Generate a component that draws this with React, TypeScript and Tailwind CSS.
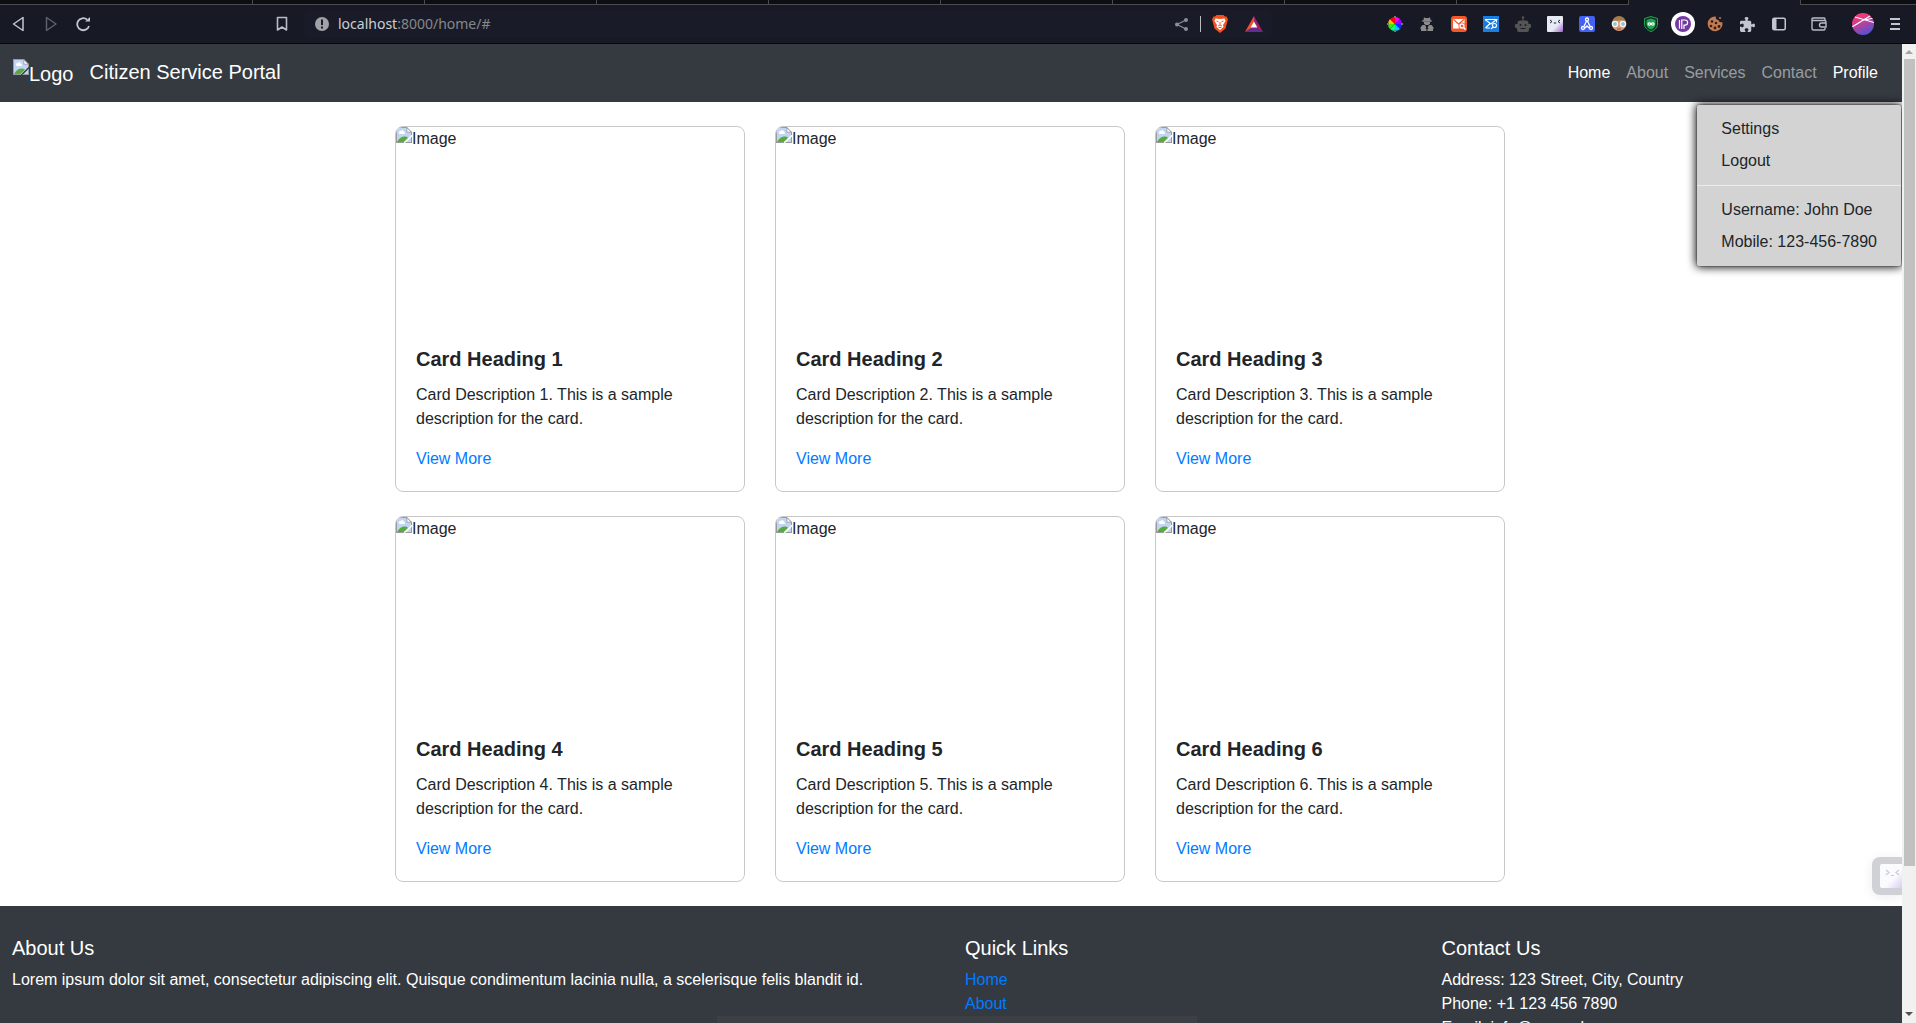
import React from "react";
import { FaPuzzlePiece } from "react-icons/fa6";

function BrokenImage({ alt, className = "" }: { alt: string; className?: string }) {
  return (
    <span role="img" aria-label={alt} className={`flex items-start ${className}`}>
      <svg width="16" height="16" viewBox="0 0 16 16" className="shrink-0" aria-hidden="true">
        <path d="M0.5 0.5H11L15.5 5V8L8 15.5H0.5Z" fill="#c3d5f5" />
        <path d="M0 0H11V1H1V15H8V16H0Z" fill="#9a9a9a" />
        <path d="M11 0L16 5V8H15V5.5H10.500V1H11Z" fill="#9a9a9a" />
        <path d="M11.300 1.500V4.700H14.500Z" fill="#fff" />
        <path d="M3 6a1.500 1.500 0 0 1 1.500-2 2 2 0 0 1 3.500 1 1 1 0 0 1 0 2H3.500Z" fill="#fff" />
        <path d="M1 15C3 11 6 9.500 8.500 9.500C10 9.500 11 10 12 10.800L7.500 15Z" fill="#56ab3a" />
        <path d="M15.500 10V15.500H10Z" fill="#c3d5f5" />
        <path d="M16 9.500V16H9.500V15H15V10.500Z" fill="#9a9a9a" />
      </svg>
      <span aria-hidden="true">{alt}</span>
    </span>
  );
}

function ToolButton({ label, children, className = "w-8" }: { label: string; children: React.ReactNode; className?: string }) {
  return (
    <button type="button" aria-label={label} className={`flex h-8 shrink-0 items-center justify-center ${className}`}>
      {children}
    </button>
  );
}

const extensions: { label: string; icon: React.ReactNode }[] = [
  {
    label: "Color picker",
    icon: (
      <svg width="16" height="16" viewBox="0 0 16 16">
        <path d="M8 8V1A7 7 0 0 1 13 3Z" fill="#f0f" />
        <path d="M8 8L13 3A7 7 0 0 1 15 8Z" fill="#90f" />
        <path d="M8 8H15A7 7 0 0 1 13 13Z" fill="#22f" />
        <path d="M8 8L13 13A7 7 0 0 1 8 15Z" fill="#0cf" />
        <path d="M8 8V15A7 7 0 0 1 3 13Z" fill="#0f8" />
        <path d="M8 8L3 13A7 7 0 0 1 1 8Z" fill="#3e0" />
        <path d="M8 8H1A7 7 0 0 1 3 3Z" fill="#fb0" />
        <path d="M8 8L3 3A7 7 0 0 1 8 1Z" fill="#f01" />
        <path d="M7 0h2v2H7zM7 14h2v2H7zM0 7h2v2H0zM14 7h2v2h-2z" fill="#777" />
      </svg>
    ),
  },
  {
    label: "Private browsing",
    icon: (
      <svg width="14" height="14" viewBox="0 0 14 14" fill="#8b8b8b">
        <path d="M4 0L5 1H9L10 0 10.500 3 12.500 4 11 4.700H3L1.500 4 3.500 3Z" />
        <path d="M4 5H10V6.500L8.500 8H5.500L4 6.500Z" />
        <path d="M2.500 8H5L6.300 10.500 5.500 12H6.500V14H1V12H0.500V10.500Z" />
        <path d="M11.500 8H9L7.700 10.500 8.500 12H7.500V14H13V12H13.500V10.500Z" />
      </svg>
    ),
  },
  {
    label: "Mail search",
    icon: (
      <svg width="16" height="16" viewBox="0 0 16 16" fill="none" stroke="#fff">
        <rect width="16" height="16" rx="3" fill="#f4592b" stroke="none" />
        <path d="M2 3H13.500V9L11 12.500H2Z" fill="#fff" stroke="none" />
        <path d="M2.500 3.500L7.500 8 13 3.500" stroke="#f4592b" strokeWidth="1.200" />
        <circle cx="11" cy="10" r="3.500" fill="#f4592b" stroke="none" />
        <circle cx="11" cy="10" r="2" strokeWidth="1.300" />
        <path d="M12.500 11.500l2 2" strokeWidth="1.500" />
      </svg>
    ),
  },
  {
    label: "Mail tracker",
    icon: (
      <svg width="16" height="16" viewBox="0 0 16 16" fill="none" stroke="#fff" strokeWidth="1.100">
        <rect width="16" height="16" fill="#1b7de0" stroke="none" />
        <path d="M2 3.500H13.500L8 8 2 3.500M2.500 12L7 7.500M2.500 12H7M13.500 3.500V6.500" />
        <circle cx="11.500" cy="9.500" r="2" />
        <path d="M10 11l-2 2" />
      </svg>
    ),
  },
  {
    label: "Robot",
    icon: (
      <svg width="16" height="16" viewBox="0 0 16 16">
        <circle cx="8" cy="1.500" r="1.200" fill="#545454" />
        <path d="M7.500 2h1v3h-1z" fill="#545454" />
        <path d="M5 4.500H11A2.500 2.500 0 0 1 13.500 7V8H15A1 1 0 0 1 16 9V11A1 1 0 0 1 15 12H14V14A2 2 0 0 1 12 16H4A2 2 0 0 1 2 14V12H1A1 1 0 0 1 0 11V9A1 1 0 0 1 1 8H2.500V7A2.500 2.500 0 0 1 5 4.500Z" fill="#545454" />
        <circle cx="5.500" cy="9" r="1" fill="#1b1d28" />
        <circle cx="10.500" cy="9" r="1" fill="#1b1d28" />
        <path d="M5.500 12.500h5" stroke="#1b1d28" />
      </svg>
    ),
  },
  {
    label: "Terminal face",
    icon: (
      <svg width="16" height="16" viewBox="0 0 16 16" fill="none">
        <defs>
          <linearGradient id="face" x1="0" y1="0" x2="1" y2="1">
            <stop offset="0.600" stopColor="#e6ebf5" />
            <stop offset="1" stopColor="#a35fd0" />
          </linearGradient>
        </defs>
        <rect width="16" height="16" rx="1" fill="url(#face)" />
        <path d="M3 4l2 1.500L3 7M13 4l-2 1.500L13 7M6.800 7h2.400" stroke="#252530" strokeWidth="1" />
      </svg>
    ),
  },
  {
    label: "Connections",
    icon: (
      <svg width="16" height="16" viewBox="0 0 16 16" fill="none" stroke="#fff" strokeWidth="1.300">
        <rect width="16" height="16" rx="2" fill="#4361f5" stroke="none" />
        <circle cx="8" cy="3.500" r="1.500" />
        <circle cx="4" cy="12" r="1.500" />
        <circle cx="12" cy="12" r="1.500" />
        <path d="M7.500 5L5 10.500M8.500 5L11 10.500M6 12l2-2 2 2" />
      </svg>
    ),
  },
  {
    label: "Reader",
    icon: (
      <svg width="16" height="16" viewBox="0 0 16 16">
        <circle cx="8" cy="8" r="7" fill="#d99c74" />
        <path d="M1 7A7 7 0 0 1 15 7L10 4 4 5Z" fill="#a37c4c" />
        <circle cx="4" cy="8" r="2.600" fill="#93c3cc" stroke="#f4f6f8" strokeWidth="1.400" />
        <circle cx="12" cy="8" r="2.600" fill="#93c3cc" stroke="#f4f6f8" strokeWidth="1.400" />
        <path d="M6 13h4" stroke="#a34c3c" />
      </svg>
    ),
  },
  {
    label: "Shield",
    icon: (
      <svg width="16" height="16" viewBox="0 0 16 16">
        <path d="M8 .5L14.500 2.500V8c0 4-3.500 6.500-6.500 7.500C5 14.500 1.500 12 1.500 8V2.500Z" fill="#10331f" stroke="#22a455" />
        <path d="M8 2.500L12.500 4v4c0 3-2 4.500-4.500 5.500C5.500 12.500 3.500 11 3.500 8V4Z" fill="#22a455" />
        <path d="M8 8c-1-1.500-3-1.500-3 0s2 1.500 3 0 3-1.500 3 0-2 1.500-3 0" fill="none" stroke="#fff" strokeWidth="1.200" />
      </svg>
    ),
  },
  {
    label: "IP",
    icon: (
      <svg width="24" height="24" viewBox="0 0 24 24">
        <circle cx="12" cy="12" r="12" fill="#fff" />
        <circle cx="12" cy="12" r="8" fill="#7438a3" />
        <path d="M8.500 8V16.500M10.800 17V8H14a2.600 2.600 0 0 1 0 5.200H13V17" fill="none" stroke="#fff" strokeWidth="1.200" />
      </svg>
    ),
  },
  {
    label: "Cookies",
    icon: (
      <svg width="16" height="16" viewBox="0 0 16 16">
        <path d="M9 0.500A2.500 2.500 0 0 0 11.500 4 2.500 2.500 0 0 0 15.200 6 7.400 7.400 0 1 1 9 .5Z" fill="#c57b4e" />
        <g fill="#2a1c20">
          <circle cx="5" cy="5.500" r="1.300" />
          <circle cx="9" cy="7" r="1.300" />
          <circle cx="4" cy="10" r="1.300" />
          <circle cx="8" cy="12" r="1.400" />
          <circle cx="12" cy="10.500" r="1.400" />
          <circle cx="13" cy="2" r="1" fill="#c57b4e" />
        </g>
      </svg>
    ),
  },
  { label: "Extensions", icon: <FaPuzzlePiece size={15} color="#c3c5d1" /> },
  {
    label: "Sidebar",
    icon: (
      <svg width="14" height="14" viewBox="0 0 14 14">
        <rect x="0.750" y="1.250" width="12.500" height="11.500" rx="1.500" fill="none" stroke="#c3c5d1" strokeWidth="1.500" />
        <path d="M1 1.500h3.500v11H1z" fill="#c3c5d1" />
      </svg>
    ),
  },
];

const tabs = ["t1", "t2", "t3", "t4", "t5", "t6", "t7", "t8"];

function BrowserChrome() {
  return (
    <header className="shrink-0 bg-[#171925]">
      <div className="flex h-[5px]">
        <div className="w-[253px] shrink-0 border-r border-b border-[#4b4c52] bg-[#0c0e12]" />
        {tabs.map((t) => (
          <div key={t} className="w-[172px] shrink-0 border-r border-b border-[#4b4c52] bg-[#0c0e12]" />
        ))}
        <div className="w-[171px] shrink-0" />
        <div className="flex-1 border-b border-l border-[#4b4c52] bg-[#0c0e12]" />
      </div>
      <div className="flex h-[39px] items-center border-b border-[#07080d] pl-[3px] pr-[5px]">
        <ToolButton label="Back">
          <svg width="14" height="16" viewBox="0 0 14 16"><path d="M11 1.500V14.500L1.500 8Z" fill="none" stroke="#c3c5d1" strokeWidth="1.500" strokeLinejoin="round" /></svg>
        </ToolButton>
        <ToolButton label="Forward">
          <svg width="14" height="16" viewBox="0 0 14 16"><path d="M2.500 1.500V14.500L12 8Z" fill="none" stroke="#5e606b" strokeWidth="1.500" strokeLinejoin="round" /></svg>
        </ToolButton>
        <ToolButton label="Reload">
          <svg width="15" height="16" viewBox="0 0 15 16"><path d="M13 10A6 6 0 1 1 11 3.500" fill="none" stroke="#c3c5d1" strokeWidth="1.800" /><path d="M9 5.500H14V1Z" fill="#c3c5d1" /></svg>
        </ToolButton>
        <div className="flex w-[205px] shrink-0 justify-end pr-[6px]">
          <ToolButton label="Bookmark">
            <svg width="12" height="16" viewBox="0 0 12 16"><path d="M1.500 1.500H10.500V14L6 11 1.500 14Z" fill="none" stroke="#b9bbc7" strokeWidth="1.600" strokeLinejoin="round" /></svg>
          </ToolButton>
        </div>
        <div className="flex h-[30px] w-[968px] shrink-0 items-center rounded-md bg-[#191c28] pl-[11px] pr-[2px]">
          <svg width="14" height="14" viewBox="0 0 14 14" className="shrink-0"><circle cx="7" cy="7" r="7" fill="#a0a2a8" /><path d="M6 2.500h2v5.500H6zM6 9.500h2v2H6z" fill="#191c28" /></svg>
          <div className="ml-[9px] flex-1 font-['Noto_Sans',sans-serif] text-sm text-[#85878c]"><span className="text-[#cdced3]">localhost</span>:8000/home/#</div>
          <ToolButton label="Share">
            <svg width="13" height="13" viewBox="0 0 13 13"><path d="M11 2L2 6.500 11 11" fill="none" stroke="#8d8f98" strokeWidth="1.200" /><g fill="#8d8f98"><circle cx="2" cy="6.500" r="2" /><circle cx="11" cy="2" r="2" /><circle cx="11" cy="11" r="2" /></g></svg>
          </ToolButton>
          <div className="ml-[3px] h-4 w-px bg-[#b9bbc2]" />
          <ToolButton label="Shields" className="ml-[3px] w-8">
            <svg width="16" height="18" viewBox="0 0 16 18"><path d="M4.500 0H11.500L13 1.500 14.500 1.500 16 4.500 15.500 6 13.500 13.500 8 18 2.500 13.500.5 6 0 4.500 1.500 1.500 3 1.500Z" fill="#f4511e" /><path d="M3.500 3.500L8 4 12.500 3.500 13.500 6 11 10 11.500 12 8 15 4.500 12 5 10 2.500 6Z" fill="#fff" /><path d="M4.500 6l2 .8M11.500 6l-2 .8M8 7v3M6 11l2-1 2 1M6.500 12.500h3" fill="none" stroke="#f4511e" strokeWidth="0.900" /></svg>
          </ToolButton>
          <ToolButton label="Rewards" className="ml-[2px] w-8">
            <svg width="18" height="16" viewBox="0 0 18 16"><path d="M9 0L0 16 9 10.500Z" fill="#f4502c" /><path d="M9 0L18 16 9 10.500Z" fill="#9e1f63" /><path d="M0 16H18L9 10Z" fill="#662d91" /><path d="M9 5.500L12.300 11.500H5.700Z" fill="#fff" /></svg>
          </ToolButton>
        </div>
        <div className="ml-auto flex items-center">
          {extensions.map((e) => (
            <ToolButton key={e.label} label={e.label}>{e.icon}</ToolButton>
          ))}
          <ToolButton label="Wallet" className="ml-2 w-8">
            <svg width="16" height="14" viewBox="0 0 16 14" fill="none" stroke="#b9bbc7" strokeWidth="1.400"><path d="M14 4V2a1 1 0 0 0-1-1H2a1 1 0 0 0-1 1v9.500a1.500 1.500 0 0 0 1.500 1.500H13a1 1 0 0 0 1-1v-1M1 3.500h12.500a1.500 1.500 0 0 1 1.500 1.500v5H10.500a2 2 0 0 1 0-4H15" /></svg>
          </ToolButton>
          <ToolButton label="Account" className="ml-3 w-8">
            <svg width="22" height="22" viewBox="0 0 22 22">
              <defs>
                <linearGradient id="avatar" x1="0.200" y1="0" x2="0.700" y2="1"><stop offset="0.200" stopColor="#f0387a" /><stop offset="1" stopColor="#4c54d8" /></linearGradient>
                <clipPath id="disc"><circle cx="11" cy="11" r="11" /></clipPath>
              </defs>
              <g clipPath="url(#disc)"><path d="M0 0H22V22H0Z" fill="url(#avatar)" /><path d="M0 14L18 3M3 4L22 9.500M10 7.500L22 5" stroke="#fff" strokeWidth="1.100" /></g>
            </svg>
          </ToolButton>
          <ToolButton label="Menu">
            <svg width="10" height="12" viewBox="0 0 10 12"><path d="M0 1h10M1 6h9M0 11h10" stroke="#c3c5d1" strokeWidth="1.800" /></svg>
          </ToolButton>
        </div>
      </div>
    </header>
  );
}

const navLinks = [
  { label: "Home", tone: "text-white" },
  { label: "About", tone: "text-white/50" },
  { label: "Services", tone: "text-white/50" },
  { label: "Contact", tone: "text-white/50" },
];

function Navbar() {
  return (
    <nav className="relative z-10 flex h-[58px] items-center bg-[#343a40] pl-[13px] pr-3 text-white">
      <a href="#" className="flex items-center text-xl">
        <BrokenImage alt="Logo" className="h-7 leading-[30px]" />
        <span className="ml-4 pb-[2px]">Citizen Service Portal</span>
      </a>
      <div className="ml-auto mr-1 flex items-center">
        {navLinks.map((l) => (
          <a key={l.label} href="#" className={`p-2 ${l.tone}`}>{l.label}</a>
        ))}
        <button type="button" aria-expanded="true" className="p-2 text-white">Profile</button>
      </div>
      <div className="absolute right-0 top-full mt-[2px] rounded border border-black/15 bg-[#d3d3d3] bg-clip-padding py-2 text-[#212529] shadow-[0_0_10px_#000]">
        <a href="#" className="block px-6 py-1">Settings</a>
        <a href="#" className="block px-6 py-1">Logout</a>
        <hr className="my-2 border-[#e9ecef]" />
        <p className="px-6 py-1">Username: John Doe</p>
        <p className="px-6 py-1">Mobile: 123-456-7890</p>
      </div>
    </nav>
  );
}

function Card({ n }: { n: number }) {
  return (
    <article className="overflow-hidden rounded-lg border border-[#c8c8c8]">
      <BrokenImage alt="Image" className="h-[200px]" />
      <div className="p-5">
        <h2 className="mb-3 text-xl leading-6 font-bold">{`Card Heading ${n}`}</h2>
        <p className="mb-4">{`Card Description ${n}. This is a sample description for the card.`}</p>
        <a href="#" className="block text-[#007bff]">View More</a>
      </div>
    </article>
  );
}

function Footer() {
  return (
    <footer className="grid grid-cols-4 gap-7 bg-[#343a40] px-3 py-[30px] text-white">
      <section className="col-span-2">
        <h2 className="mb-2 text-xl leading-6">About Us</h2>
        <p>Lorem ipsum dolor sit amet, consectetur adipiscing elit. Quisque condimentum lacinia nulla, a scelerisque felis blandit id.</p>
      </section>
      <section>
        <h2 className="mb-2 text-xl leading-6">Quick Links</h2>
        <ul className="text-[#007bff]">
          <li><a href="#">Home</a></li>
          <li><a href="#">About</a></li>
        </ul>
      </section>
      <section>
        <h2 className="mb-2 text-xl leading-6">Contact Us</h2>
        <p>Address: 123 Street, City, Country</p>
        <p>Phone: +1 123 456 7890</p>
        <p>Email: info@example.com</p>
      </section>
    </footer>
  );
}

function Scrollbar() {
  return (
    <div className="flex w-[14px] shrink-0 flex-col items-center bg-[#f1f1f1]" aria-hidden="true">
      <svg width="8" height="15" viewBox="0 0 8 15" className="shrink-0"><path d="M0 10L4 6 8 10Z" fill="#a3a3a3" /></svg>
      <div className="flex min-h-0 w-[11px] flex-1 flex-col"><div className="h-[85%] bg-[#c1c1c1]" /></div>
      <svg width="8" height="15" viewBox="0 0 8 15" className="shrink-0"><path d="M0 4L4 8 8 4Z" fill="#505050" /></svg>
    </div>
  );
}

export default function App() {
  return (
    <div className="flex h-screen flex-col overflow-hidden bg-white">
      <BrowserChrome />
      <div className="flex min-h-0 flex-1">
        <div className="relative min-w-0 flex-1 overflow-hidden font-['Liberation_Sans',Arial,sans-serif] text-base text-[#212529]">
          <Navbar />
          <main className="mx-auto grid max-w-[1112px] grid-cols-3 gap-x-[30px] gap-y-6 py-6 pr-[2px]">
            {[1, 2, 3, 4, 5, 6].map((n) => <Card key={n} n={n} />)}
          </main>
          <Footer />
          <button type="button" aria-label="Open assistant" className="absolute right-0 bottom-32 flex h-[38px] w-[30px] items-center justify-end rounded-l-lg bg-[#d0d1d6] shadow-[0_2px_12px_rgba(0,0,0,0.08)]">
            <svg width="22" height="24" viewBox="0 0 22 24" fill="none">
              <defs><linearGradient id="helper" x1="0" y1="0" x2="1" y2="1"><stop offset="0.600" stopColor="#fafaff" /><stop offset="1" stopColor="#dccbf2" /></linearGradient></defs>
              <path d="M2 0H22V24H2A2 2 0 0 1 0 22V2A2 2 0 0 1 2 0Z" fill="url(#helper)" />
              <path d="M6 6l3 2.500L6 11M19 6l-3 2.500L19 11M11 11.500h3" stroke="#c9c9d0" strokeWidth="1.200" />
            </svg>
          </button>
          <div className="absolute bottom-0 left-[717px] h-[7px] w-[480px] bg-[#3c3f44]" />
        </div>
        <Scrollbar />
      </div>
    </div>
  );
}
